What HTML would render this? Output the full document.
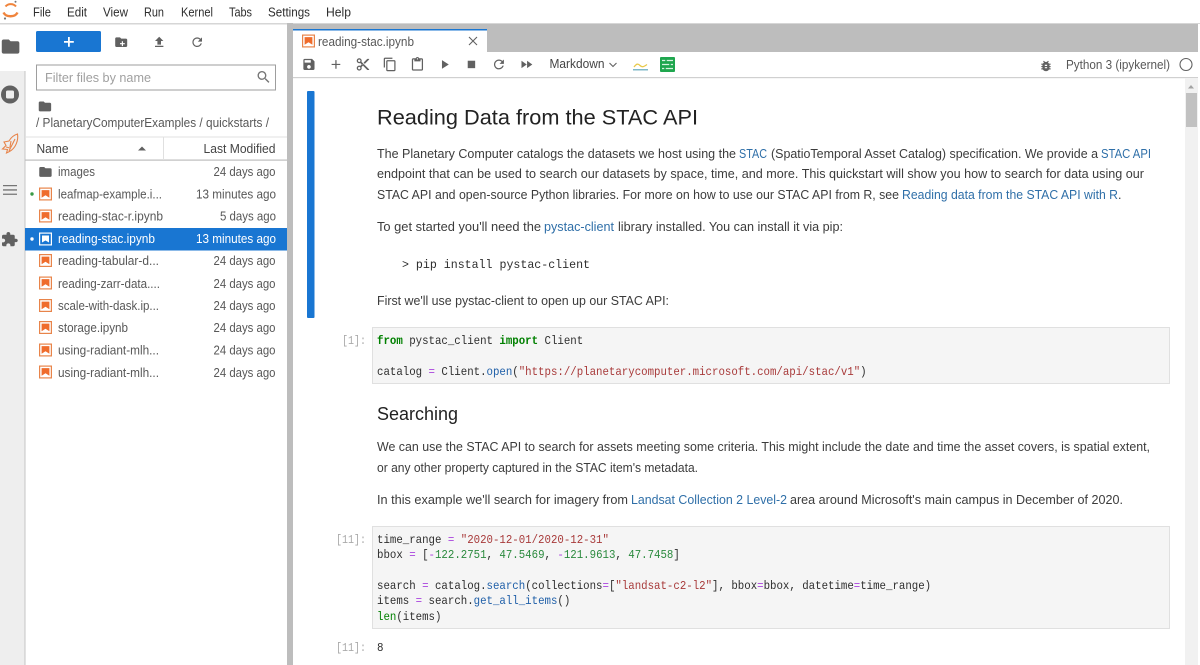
<!DOCTYPE html>
<html><head><meta charset="utf-8"><title>JupyterLab</title>
<style>
html,body{margin:0;padding:0;width:1200px;height:665px;overflow:hidden;background:#fff}
svg{display:block;filter:blur(.3px)}
text{font-family:"Liberation Sans",sans-serif;fill:#4d4d4d;font-size:12.5px;}
.m{font-size:12.5px;fill:#2e2e2e}
.f{font-size:12.5px;fill:#585858}
.p{font-size:12.5px;fill:#3c3c3c}
.l{font-size:12.5px;fill:#2f6fa8}
.c tspan,.c{font-family:"Liberation Mono",monospace;font-size:12px;fill:#2e2e2e}
.pr{font-family:"Liberation Mono",monospace;font-size:11.5px;fill:#aaa}
.k{fill:#008000!important;font-weight:bold}
.s{fill:#a83a3a!important}
.n{fill:#2b8a3e!important}
.o{fill:#aa44dd!important}
.b{fill:#1f5fa8!important}
.g{fill:#008000!important}
.ic{fill:#616161}
</style></head><body>
<svg width="1200" height="665" viewBox="0 0 1200 665" xmlns="http://www.w3.org/2000/svg">
<defs>
<path id="folder" d="M10 4H4c-1.1 0-1.99.9-1.99 2L2 18c0 1.1.9 2 2 2h16c1.1 0 2-.9 2-2V8c0-1.1-.9-2-2-2h-8l-2-2z"/>
<path id="refresh" d="M17.65 6.35C16.2 4.9 14.21 4 12 4c-4.42 0-7.99 3.58-7.99 8s3.57 8 7.99 8c3.73 0 6.84-2.55 7.73-6h-2.08c-.82 2.33-3.04 4-5.65 4-3.31 0-6-2.69-6-6s2.69-6 6-6c1.66 0 3.14.69 4.22 1.78L13 11h7V4l-2.35 2.35z"/>
<g id="nb"><rect x="0.6" y="0.6" width="11.8" height="11.8" fill="#fff" stroke="#e8844a" stroke-width="1.2"/><path d="M2.6 2.6h7.8v7.6L6.5 7.8 2.6 10.2z" fill="#ef6c2c"/></g>
</defs>
<rect width="1200" height="665" fill="#fff"/>
<!-- top -->
<rect x="0" y="23" width="1200" height="1.5" fill="#d6d6d6"/>
<path d="M5.500 6.500c2.500-3.200 8-3.200 10.500 0" fill="none" stroke="#f0843c" stroke-width="2"/>
<path d="M3.500 12.500c2.500 5 11.500 5 14 0" fill="none" stroke="#f0843c" stroke-width="2.400"/>
<circle cx="15.500" cy="1.800" r="1" fill="#767677"/><circle cx="5" cy="18.500" r="1.100" fill="#767677"/>
<text class="m" x="33" y="16.500" textLength="18" lengthAdjust="spacingAndGlyphs">File</text>
<text class="m" x="67" y="16.500" textLength="20" lengthAdjust="spacingAndGlyphs">Edit</text>
<text class="m" x="103" y="16.500" textLength="25" lengthAdjust="spacingAndGlyphs">View</text>
<text class="m" x="144" y="16.500" textLength="20" lengthAdjust="spacingAndGlyphs">Run</text>
<text class="m" x="181" y="16.500" textLength="32" lengthAdjust="spacingAndGlyphs">Kernel</text>
<text class="m" x="229" y="16.500" textLength="23" lengthAdjust="spacingAndGlyphs">Tabs</text>
<text class="m" x="268" y="16.500" textLength="42" lengthAdjust="spacingAndGlyphs">Settings</text>
<text class="m" x="326" y="16.500" textLength="25" lengthAdjust="spacingAndGlyphs">Help</text>
<!-- side bar -->
<rect x="0" y="71" width="25" height="594" fill="#eeeeee"/>
<rect x="24.500" y="71" width="1" height="594" fill="#c4c4c4"/>
<use href="#folder" class="ic" transform="translate(0,36) scale(.88)"/>
<circle cx="10" cy="94.500" r="9" fill="#616161"/><rect x="6" y="90.500" width="8" height="8" rx="1.500" fill="#eee"/>
<g fill="none" stroke="#e8844a" stroke-width="1.100"><path d="M17.500 134c1 6-1.500 14-8 17.500l-3 1.500 1-3.500-5-.5 3.500-3.500-2-3.500 5-1c2-3.500 5-6 8.500-7z"/><path d="M15 139l-6 12M11 141l-1 6M6 147l4 1"/></g>
<g fill="#757575"><path d="M3 185h14v1.300H3zM3 189.300h14v1.300H3zM3 193.600h14v1.300H3z"/></g>
<path transform="translate(.5,231.300) scale(.75,.68)" fill="#616161" d="M20.500 11H19V7c0-1.100-.9-2-2-2h-4V3.500C13 2.120 11.880 1 10.500 1S8 2.120 8 3.500V5H4c-1.100 0-1.990.9-1.990 2v3.800H3.500c1.490 0 2.700 1.210 2.700 2.700s-1.210 2.700-2.700 2.700H2V20c0 1.100.9 2 2 2h3.800v-1.500c0-1.490 1.210-2.700 2.700-2.700 1.490 0 2.700 1.210 2.700 2.700V22H17c1.100 0 2-.9 2-2v-4h1.500c1.380 0 2.500-1.120 2.500-2.500S21.880 11 20.500 11z"/>
<!-- file panel -->
<rect x="36" y="31" width="65" height="21" rx="1.500" fill="#1976d2"/>
<path d="M64 41h4v-4h1.800v4h4v1.800h-4v4H68v-4h-4z" fill="#fff"/>
<g transform="translate(114,35) scale(.6)"><use href="#folder" class="ic"/><path d="M13 10.500h2v3h3v2h-3v3h-2v-3h-3v-2h3z" fill="#fff"/></g>
<path transform="translate(152,35) scale(.6)" class="ic" d="M9 16h6v-6h4l-7-7-7 7h4zm-4 2h14v2H5z"/>
<use href="#refresh" class="ic" transform="translate(190,35) scale(.6)"/>
<rect x="36.500" y="65" width="239" height="25" fill="#fff" stroke="#9e9e9e" stroke-width="1"/>
<text x="45" y="82" textLength="106" lengthAdjust="spacingAndGlyphs" style="fill:#a0a0a0;font-size:13px">Filter files by name</text>
<path transform="translate(255.500,69) scale(.68)" fill="#757575" d="M15.500 14h-.79l-.28-.27C15.410 12.590 16 11.110 16 9.500 16 5.910 13.090 3 9.500 3S3 5.910 3 9.500 5.910 16 9.500 16c1.610 0 3.090-.59 4.230-1.570l.27.28v.79l5 4.990L20.490 19l-4.990-5zm-6 0C7.010 14 5 11.990 5 9.500S7.010 5 9.500 5 14 7.010 14 9.500 11.990 14 9.500 14z"/>
<use href="#folder" class="ic" transform="translate(37.500,99) scale(.62)"/>
<text class="f" x="36" y="127" textLength="233" lengthAdjust="spacingAndGlyphs">/ PlanetaryComputerExamples / quickstarts /</text>
<rect x="25" y="136.500" width="262" height="1" fill="#e0e0e0"/>
<rect x="25" y="159.500" width="262" height="1.200" fill="#bdbdbd"/>
<rect x="163" y="137" width="1" height="23" fill="#e0e0e0"/>
<text class="m" x="36.500" y="153" textLength="32" lengthAdjust="spacingAndGlyphs" style="fill:#444">Name</text>
<path d="M138 150.500l4-4 4 4z" fill="#616161"/>
<text class="m" x="203.500" y="153" textLength="72" lengthAdjust="spacingAndGlyphs" style="fill:#444">Last Modified</text>
<rect x="25" y="228" width="262" height="22.500" fill="#1976d2"/>
<use href="#folder" class="ic" transform="translate(38,164.500) scale(.62)"/>
<text class="f" x="58" y="176" textLength="37" lengthAdjust="spacingAndGlyphs">images</text>
<text class="f" x="213.500" y="176" textLength="62" lengthAdjust="spacingAndGlyphs">24 days ago</text>
<circle cx="32" cy="194" r="1.700" fill="#3a9a45"/>
<use href="#nb" transform="translate(39,187.500)"/>
<text class="f" x="58" y="198.500" textLength="104" lengthAdjust="spacingAndGlyphs">leafmap-example.i...</text>
<text class="f" x="196" y="198.500" textLength="80" lengthAdjust="spacingAndGlyphs">13 minutes ago</text>
<use href="#nb" transform="translate(39,209.500)"/>
<text class="f" x="58" y="220.500" textLength="105" lengthAdjust="spacingAndGlyphs">reading-stac-r.ipynb</text>
<text class="f" x="220" y="220.500" textLength="56" lengthAdjust="spacingAndGlyphs">5 days ago</text>
<circle cx="32" cy="239" r="1.700" fill="#fff"/>
<g transform="translate(39,232.500)"><rect x="0.600" y="0.600" width="11.800" height="11.800" fill="#1976d2" stroke="#fff" stroke-width="1.200"/><path d="M3 3h7v7L6.500 8 3 10z" fill="#fff"/></g>
<text x="58" y="243" textLength="97" lengthAdjust="spacingAndGlyphs" style="fill:#fff">reading-stac.ipynb</text>
<text x="196" y="243" textLength="80" lengthAdjust="spacingAndGlyphs" style="fill:#fff">13 minutes ago</text>
<use href="#nb" transform="translate(39,254)"/>
<text class="f" x="58" y="265" textLength="101" lengthAdjust="spacingAndGlyphs">reading-tabular-d...</text>
<text class="f" x="213.500" y="265" textLength="62" lengthAdjust="spacingAndGlyphs">24 days ago</text>
<use href="#nb" transform="translate(39,276.500)"/>
<text class="f" x="58" y="288" textLength="102" lengthAdjust="spacingAndGlyphs">reading-zarr-data....</text>
<text class="f" x="213.500" y="288" textLength="62" lengthAdjust="spacingAndGlyphs">24 days ago</text>
<use href="#nb" transform="translate(39,299)"/>
<text class="f" x="58" y="310" textLength="101" lengthAdjust="spacingAndGlyphs">scale-with-dask.ip...</text>
<text class="f" x="213.500" y="310" textLength="62" lengthAdjust="spacingAndGlyphs">24 days ago</text>
<use href="#nb" transform="translate(39,321)"/>
<text class="f" x="58" y="332" textLength="70" lengthAdjust="spacingAndGlyphs">storage.ipynb</text>
<text class="f" x="213.500" y="332" textLength="62" lengthAdjust="spacingAndGlyphs">24 days ago</text>
<use href="#nb" transform="translate(39,343.500)"/>
<text class="f" x="58" y="354.500" textLength="101" lengthAdjust="spacingAndGlyphs">using-radiant-mlh...</text>
<text class="f" x="213.500" y="354.500" textLength="62" lengthAdjust="spacingAndGlyphs">24 days ago</text>
<use href="#nb" transform="translate(39,365.500)"/>
<text class="f" x="58" y="377" textLength="101" lengthAdjust="spacingAndGlyphs">using-radiant-mlh...</text>
<text class="f" x="213.500" y="377" textLength="62" lengthAdjust="spacingAndGlyphs">24 days ago</text>
<!-- splitter and tab bar -->
<rect x="287" y="23" width="6" height="642" fill="#bdbdbd"/>
<rect x="293" y="24" width="907" height="28" fill="#bdbdbd"/>
<rect x="293" y="29" width="194" height="23" fill="#fff"/>
<rect x="293" y="29" width="194" height="1.500" fill="#1976d2"/>
<use href="#nb" transform="translate(302,34.500)"/>
<text class="f" x="318" y="46" textLength="96" lengthAdjust="spacingAndGlyphs">reading-stac.ipynb</text>
<path d="M469 37l8 8M477 37l-8 8" stroke="#616161" stroke-width="1.100" fill="none"/>
<!-- toolbar -->
<rect x="293" y="52" width="907" height="25" fill="#fff"/>
<rect x="293" y="77" width="905" height="1.200" fill="#d0d0d0"/>
<g class="ic">
<path transform="translate(301.500,57) scale(.62)" d="M17 3H5c-1.110 0-2 .9-2 2v14c0 1.100.89 2 2 2h14c1.100 0 2-.9 2-2V7l-4-4zm-5 16c-1.660 0-3-1.340-3-3s1.340-3 3-3 3 1.340 3 3-1.340 3-3 3zm3-10H5V5h10v4z"/>
<path transform="translate(328.500,57) scale(.62)" d="M19 13h-6v6h-2v-6H5v-2h6V5h2v6h6v2z"/>
<path transform="translate(355.500,57) scale(.62)" d="M9.640 7.640c.23-.5.36-1.050.36-1.640 0-2.210-1.790-4-4-4S2 3.790 2 6s1.790 4 4 4c.59 0 1.140-.13 1.640-.36L10 12l-2.360 2.360C7.140 14.130 6.590 14 6 14c-2.210 0-4 1.790-4 4s1.790 4 4 4 4-1.790 4-4c0-.59-.13-1.140-.36-1.640L12 14l7 7h3v-1L9.640 7.640zM6 8c-1.100 0-2-.89-2-2s.9-2 2-2 2 .89 2 2-.9 2-2 2zm0 12c-1.100 0-2-.89-2-2s.9-2 2-2 2 .89 2 2-.9 2-2 2zm6-7.500c-.28 0-.5-.22-.5-.5s.22-.5.5-.5.5.22.5.5-.22.5-.5.5zM19 3l-6 6 2 2 7-7V3z"/>
<path transform="translate(382.500,57) scale(.62)" d="M16 1H4c-1.100 0-2 .9-2 2v14h2V3h12V1zm3 4H8c-1.100 0-2 .9-2 2v14c0 1.100.9 2 2 2h11c1.100 0 2-.9 2-2V7c0-1.100-.9-2-2-2zm0 16H8V7h11v14z"/>
<path transform="translate(410,57) scale(.62)" d="M19 2h-4.180C14.400.84 13.300 0 12 0c-1.300 0-2.400.84-2.820 2H5c-1.100 0-2 .9-2 2v16c0 1.100.9 2 2 2h14c1.100 0 2-.9 2-2V4c0-1.100-.9-2-2-2zm-7 0c.55 0 1 .45 1 1s-.45 1-1 1-1-.45-1-1 .45-1 1-1zm7 18H5V4h2v3h10V4h2v16z"/>
<path transform="translate(437,57) scale(.62)" d="M8 5v14l11-7z"/>
<path transform="translate(464,57) scale(.62)" d="M6 6h12v12H6z"/>
<path transform="translate(491.500,57) scale(.62)" d="M17.650 6.350C16.200 4.900 14.210 4 12 4c-4.420 0-7.990 3.580-7.990 8s3.570 8 7.990 8c3.730 0 6.840-2.550 7.730-6h-2.080c-.82 2.330-3.040 4-5.650 4-3.310 0-6-2.690-6-6s2.690-6 6-6c1.660 0 3.140.69 4.220 1.780L13 11h7V4l-2.350 2.350z"/>
<path transform="translate(519,57) scale(.62)" d="M4 18l8.500-6L4 6v12zm9-12v12l8.500-6L13 6z"/>
</g>
<text class="f" x="549.500" y="68" textLength="55" lengthAdjust="spacingAndGlyphs" style="fill:#444">Markdown</text>
<path d="M609.500 63l3.500 3.500 3.500-3.500" fill="none" stroke="#616161" stroke-width="1.100"/>
<path d="M634 67c2.500-3.500 4-3.500 6-1.500s3.500 1.500 7-1" fill="none" stroke="#e8c94a" stroke-width="1.300"/>
<rect x="633" y="69" width="15" height="1.500" fill="#7fb8c8"/>
<rect x="660" y="57" width="15" height="15" rx="1" fill="#1fa64e"/>
<path d="M662 60.500h11M662 64.500h11M662 68.500h11" stroke="#d6f2df" stroke-width="1.200"/>
<path d="M666 59.500v2M670 63.500v2M665 67.500v2" stroke="#1fa64e" stroke-width="1.500"/>
<path transform="translate(1039,59) scale(.58)" class="ic" d="M20 8h-2.810c-.45-.78-1.070-1.450-1.820-1.960L17 4.410 15.590 3l-2.170 2.170C12.960 5.060 12.490 5 12 5c-.49 0-.96.06-1.410.17L8.410 3 7 4.410l1.620 1.630C7.880 6.550 7.260 7.220 6.810 8H4v2h2.090c-.05.33-.09.66-.09 1v1H4v2h2v1c0 .34.04.67.09 1H4v2h2.810c1.040 1.790 2.970 3 5.190 3s4.150-1.210 5.190-3H20v-2h-2.090c.05-.33.09-.66.09-1v-1h2v-2h-2v-1c0-.34-.04-.67-.09-1H20V8zm-6 8h-4v-2h4v2zm0-4h-4v-2h4v2z"/>
<text class="f" x="1066" y="69" textLength="104" lengthAdjust="spacingAndGlyphs">Python 3 (ipykernel)</text>
<circle cx="1186" cy="64.500" r="6" fill="none" stroke="#616161" stroke-width="1.100"/>
<!-- scrollbar -->
<rect x="1185" y="78" width="13" height="587" fill="#f1f1f1"/>
<path d="M1188 88.500l3-3.500 3 3.500z" fill="#a3a3a3"/>
<rect x="1186" y="93" width="11" height="34" fill="#c1c1c1"/>
<rect x="1198" y="24" width="2" height="641" fill="#fff"/>
<!-- notebook -->
<rect x="307" y="91" width="7.500" height="227" rx="1" fill="#1976d2"/>
<text x="377" y="124.500" textLength="321" lengthAdjust="spacingAndGlyphs" style="font-size:21px;fill:#222">Reading Data from the STAC API</text>
<text class="p" x="377" y="158" textLength="359" lengthAdjust="spacingAndGlyphs">The Planetary Computer catalogs the datasets we host using the</text>
<text class="l" x="739" y="158" textLength="28" lengthAdjust="spacingAndGlyphs">STAC</text>
<text class="p" x="771" y="158" textLength="327" lengthAdjust="spacingAndGlyphs">(SpatioTemporal Asset Catalog) specification. We provide a</text>
<text class="l" x="1101" y="158" textLength="50" lengthAdjust="spacingAndGlyphs">STAC API</text>
<text class="p" x="377" y="178" textLength="767" lengthAdjust="spacingAndGlyphs">endpoint that can be used to search our datasets by space, time, and more. This quickstart will show you how to search for data using our</text>
<text class="p" x="377" y="199" textLength="522" lengthAdjust="spacingAndGlyphs">STAC API and open-source Python libraries. For more on how to use our STAC API from R, see</text>
<text class="l" x="902" y="199" textLength="216" lengthAdjust="spacingAndGlyphs">Reading data from the STAC API with R</text>
<text class="p" x="1118" y="199">.</text>
<text class="p" x="377" y="231" textLength="164" lengthAdjust="spacingAndGlyphs">To get started you'll need the</text>
<text class="l" x="544" y="231" textLength="70" lengthAdjust="spacingAndGlyphs">pystac-client</text>
<text class="p" x="618" y="231" textLength="225" lengthAdjust="spacingAndGlyphs">library installed. You can install it via pip:</text>
<text class="c" x="402" y="268" textLength="188" lengthAdjust="spacingAndGlyphs" xml:space="preserve">&gt; pip install pystac-client</text>
<text class="p" x="377" y="305" textLength="292" lengthAdjust="spacingAndGlyphs">First we'll use pystac-client to open up our STAC API:</text>
<!-- cell 1 -->
<rect x="372.500" y="327.500" width="797" height="56" fill="#f5f5f5" stroke="#e0e0e0"/>
<text class="pr" x="342" y="344" textLength="24" lengthAdjust="spacingAndGlyphs">[1]:</text>
<g transform="translate(377,0) scale(.896,1)">
<text class="c" x="0" y="344" xml:space="preserve"><tspan class="k">from</tspan> pystac_client <tspan class="k">import</tspan> Client</text>
<text class="c" x="0" y="375" xml:space="preserve">catalog <tspan class="o">=</tspan> Client.<tspan class="b">open</tspan>(<tspan class="s">"https://planetarycomputer.microsoft.com/api/stac/v1"</tspan>)</text>
</g>
<text x="377" y="420" textLength="81" lengthAdjust="spacingAndGlyphs" style="font-size:18px;fill:#222">Searching</text>
<text class="p" x="377" y="451" textLength="773" lengthAdjust="spacingAndGlyphs">We can use the STAC API to search for assets meeting some criteria. This might include the date and time the asset covers, is spatial extent,</text>
<text class="p" x="377" y="472" textLength="321" lengthAdjust="spacingAndGlyphs">or any other property captured in the STAC item's metadata.</text>
<text class="p" x="377" y="504" textLength="251" lengthAdjust="spacingAndGlyphs">In this example we'll search for imagery from</text>
<text class="l" x="631" y="504" textLength="156" lengthAdjust="spacingAndGlyphs">Landsat Collection 2 Level-2</text>
<text class="p" x="790" y="504" textLength="333" lengthAdjust="spacingAndGlyphs">area around Microsoft's main campus in December of 2020.</text>
<!-- cell 2 -->
<rect x="372.500" y="526.500" width="797" height="102" fill="#f5f5f5" stroke="#e0e0e0"/>
<text class="pr" x="336" y="543" textLength="30" lengthAdjust="spacingAndGlyphs">[11]:</text>
<g transform="translate(377,0) scale(.896,1)">
<text class="c" x="0" y="543" xml:space="preserve">time_range <tspan class="o">=</tspan> <tspan class="s">"2020-12-01/2020-12-31"</tspan></text>
<text class="c" x="0" y="558" xml:space="preserve">bbox <tspan class="o">=</tspan> [<tspan class="o">-</tspan><tspan class="n">122.2751</tspan>, <tspan class="n">47.5469</tspan>, <tspan class="o">-</tspan><tspan class="n">121.9613</tspan>, <tspan class="n">47.7458</tspan>]</text>
<text class="c" x="0" y="589" xml:space="preserve">search <tspan class="o">=</tspan> catalog.<tspan class="b">search</tspan>(collections<tspan class="o">=</tspan>[<tspan class="s">"landsat-c2-l2"</tspan>], bbox<tspan class="o">=</tspan>bbox, datetime<tspan class="o">=</tspan>time_range)</text>
<text class="c" x="0" y="604" xml:space="preserve">items <tspan class="o">=</tspan> search.<tspan class="b">get_all_items</tspan>()</text>
<text class="c" x="0" y="620" xml:space="preserve"><tspan class="g">len</tspan>(items)</text>
</g>
<text class="pr" x="336" y="651" textLength="30" lengthAdjust="spacingAndGlyphs">[11]:</text>
<text class="c" x="377" y="651" textLength="6.500" lengthAdjust="spacingAndGlyphs">8</text>
</svg>
</body></html>
